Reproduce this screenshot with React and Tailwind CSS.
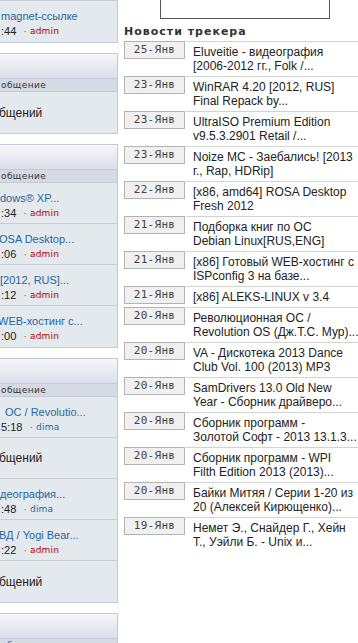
import React from 'react';

const BOX_BORDER = 'border-[#c3cad3]';

const boxes = [
  {
    offset: '-mt-[79px]',
    rows: [
      { type: 'blank' },
      { type: 'topic', title: 'magnet-ссылке', tml: 'ml-0', time: ':44', author: 'admin' },
    ],
  },
  {
    offset: 'mt-[10px]',
    rows: [{ type: 'none' }],
  },
  {
    offset: 'mt-[10px]',
    rows: [
      { type: 'topic', title: 'dows® XP...', tml: '-ml-[1px]', time: ':34', author: 'admin' },
      { type: 'topic', title: 'OSA Desktop...', tml: '-ml-[2px]', time: ':06', author: 'admin' },
      { type: 'topic', title: '[2012, RUS]...', tml: '-ml-[1px]', time: ':12', author: 'admin' },
      { type: 'topic', title: 'WEB-хостинг с...', tml: '-ml-[3px]', time: ':00', author: 'admin' },
    ],
  },
  {
    offset: 'mt-[10px]',
    rows: [
      { type: 'topic', title: 'OC / Revolutio...', tml: 'ml-[4px]', time: '5:18', author: 'dima' },
      { type: 'none' },
      { type: 'topic', title: 'деография...', tml: '-ml-[1px]', time: ':48', author: 'dima' },
      { type: 'topic', title: 'ВД / Yogi Bear...', tml: '-ml-[2px]', time: ':22', author: 'admin' },
      { type: 'none' },
    ],
  },
  {
    offset: 'mt-[10px]',
    rows: [{ type: 'none' }],
  },
];

const news = [
  { date: '25-Янв', lines: ['Eluveitie - видеография', '[2006-2012 гг., Folk /...'] },
  { date: '23-Янв', lines: ['WinRAR 4.20 [2012, RUS]', 'Final Repack by...'] },
  { date: '23-Янв', lines: ['UltraISO Premium Edition', 'v9.5.3.2901 Retail /...'] },
  { date: '23-Янв', lines: ['Noize MC - Заебались! [2013', 'г., Rap, HDRip]'] },
  { date: '22-Янв', lines: ['[x86, amd64] ROSA Desktop', 'Fresh 2012'] },
  { date: '21-Янв', lines: ['Подборка книг по ОС', 'Debian Linux[RUS,ENG]'] },
  { date: '21-Янв', lines: ['[x86] Готовый WEB-хостинг с', 'ISPconfig 3 на базе...'] },
  { date: '21-Янв', lines: ['[x86] ALEKS-LINUX v 3.4'] },
  { date: '20-Янв', lines: ['Революционная ОС /', 'Revolution OS (Дж.Т.С. Мур)...'] },
  { date: '20-Янв', lines: ['VA - Дискотека 2013 Dance', 'Club Vol. 100 (2013) MP3'] },
  { date: '20-Янв', lines: ['SamDrivers 13.0 Old New', 'Year - Сборник драйверо...'] },
  { date: '20-Янв', lines: ['Сборник программ -', 'Золотой Софт - 2013 13.1.3...'] },
  { date: '20-Янв', lines: ['Сборник программ - WPI', 'Filth Edition 2013 (2013)...'] },
  { date: '20-Янв', lines: ['Байки Митяя / Серии 1-20 из', '20 (Алексей Кирющенко)...'] },
  { date: '19-Янв', lines: ['Немет Э., Снайдер Г., Хейн', 'Т., Уэйли Б. - Unix и...'] },
];

const SideRow = ({ row }) => {
  if (row.type === 'blank') return <div className="h-[41px]" />;
  if (row.type === 'none') {
    return (
      <div className="flex h-[41px] items-center pl-[20px] text-[12px] text-[#222]">
        бщений
      </div>
    );
  }
  return (
    <div className="h-[41px] pl-[22px] pt-[8px] whitespace-nowrap">
      <div className={`${row.tml} text-[11px] leading-[15px] text-[#1f67a0]`}>{row.title}</div>
      <div className="flex items-center text-[11px] leading-[14px]">
        <span className="text-[#222]">{row.time}</span>
        <span className="ml-[7px] text-[#777]">·</span>
        <span
          className={`ml-[3px] font-['DejaVu_Sans',sans-serif] text-[9px] tracking-[0.2px] ${
            row.author === 'admin' ? 'text-[#b00000]' : 'text-[#1f67a0]'
          }`}
        >
          {row.author}
        </span>
      </div>
    </div>
  );
};

const SideBox = ({ box }) => (
  <div className={`-ml-[22px] w-[140px] border ${BOX_BORDER} bg-[#e4e9ee] ${box.offset}`}>
    <div className="h-[24px] bg-linear-to-b from-[#f6f6f9] to-[#dcdfeb]" />
    <div
      className={`h-[14px] border-y ${BOX_BORDER} bg-[#d6dae3] pl-[22px] font-['DejaVu_Sans',sans-serif] text-[9px] leading-[12px] tracking-[0.4px] text-[#333]`}
    >
      общение
    </div>
    <div className="divide-y divide-[#c6cdd6]">
      {box.rows.map((row, i) => (
        <SideRow key={i} row={row} />
      ))}
    </div>
  </div>
);

export default function App() {
  return (
    <div className="flex h-[643px] w-[358px] overflow-hidden bg-white font-['Liberation_Sans',Arial,sans-serif]">
      {/* left sidebar, scrolled partly out of view */}
      <div className="w-[118px] shrink-0 overflow-hidden">
        {boxes.map((box, i) => (
          <SideBox key={i} box={box} />
        ))}
      </div>

      {/* tracker news */}
      <div className="ml-[6px] min-w-0 flex-1">
        <div className="ml-[36px] h-[19px] w-[170px] border-x border-b border-[#555]" />
        <div className="mt-[6px] mb-[2px] h-[14px] font-['DejaVu_Sans',sans-serif] text-[11px] font-bold leading-[14px] tracking-[1px] text-[#333] whitespace-nowrap">
          Новости трекера
        </div>
        <div>
          {news.map((item, i) => (
            <div key={i} className="flex">
              <div className="h-[18px] w-[61px] shrink-0 border border-[#b3b3b3] bg-[#f0f0f0] text-center font-['DejaVu_Sans_Mono',monospace] text-[11px] leading-[16px] tracking-[0.3px] text-[#444]">
                {item.date}
              </div>
              <div className="ml-[1px] flex-1 border-t border-[#d3d3d3] pt-[3px] pb-[3px] pl-[7px] text-[12px] leading-[14px] text-[#222] whitespace-nowrap">
                {item.lines.map((l, j) => (
                  <div key={j}>{l}</div>
                ))}
              </div>
            </div>
          ))}
        </div>
      </div>
    </div>
  );
}
